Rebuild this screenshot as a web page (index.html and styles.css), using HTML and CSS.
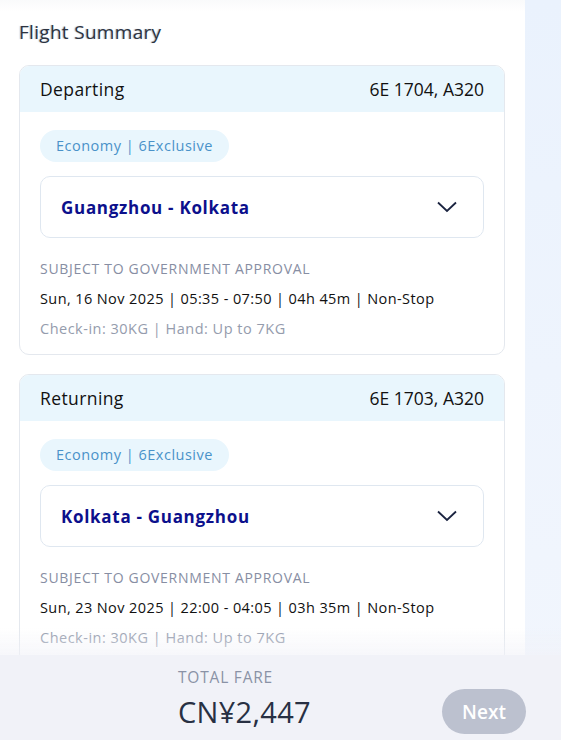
FILE: index.html
```html
<!DOCTYPE html>
<html>
<head>
<meta charset="utf-8">
<link rel="stylesheet" href="styles.css">
</head>
<body>
<div class="layout">
  <main class="panel">
    <h1 class="title">Flight Summary</h1>
    <section class="card">
      <div class="card-head">
        <span>Departing</span>
        <span class="flight-no">6E 1704, A320</span>
      </div>
      <div class="card-body">
        <span class="pill">Economy | 6Exclusive</span>
        <div class="route">
          <span class="route-name">Guangzhou - Kolkata</span>
          <svg class="chev" width="20" height="12" viewBox="0 0 20 12"><path d="M1 1.5 L10 10 L19 1.5" fill="none" stroke="#1b2440" stroke-width="1.8"/></svg>
        </div>
        <div class="approval">SUBJECT TO GOVERNMENT APPROVAL</div>
        <div class="when">Sun, 16 Nov 2025 | 05:35 - 07:50 | 04h 45m | Non-Stop</div>
        <div class="bags">Check-in: 30KG | Hand: Up to 7KG</div>
      </div>
    </section>
    <section class="card">
      <div class="card-head">
        <span>Returning</span>
        <span class="flight-no">6E 1703, A320</span>
      </div>
      <div class="card-body">
        <span class="pill">Economy | 6Exclusive</span>
        <div class="route">
          <span class="route-name">Kolkata - Guangzhou</span>
          <svg class="chev" width="20" height="12" viewBox="0 0 20 12"><path d="M1 1.5 L10 10 L19 1.5" fill="none" stroke="#1b2440" stroke-width="1.8"/></svg>
        </div>
        <div class="approval">SUBJECT TO GOVERNMENT APPROVAL</div>
        <div class="when">Sun, 23 Nov 2025 | 22:00 - 04:05 | 03h 35m | Non-Stop</div>
        <div class="bags">Check-in: 30KG | Hand: Up to 7KG</div>
      </div>
    </section>
  </main>
  <aside class="side"></aside>
</div>
<div class="fade"></div>
<footer class="footer">
  <div class="fare">
    <div class="fare-label">TOTAL FARE</div>
    <div class="fare-amount">CN¥2,447</div>
  </div>
  <button class="next">Next</button>
</footer>
</body>
</html>
```
FILE: styles.css
```css
html, body {
  margin: 0;
  padding: 0;
  height: 740px;
  overflow: hidden;
  font-family: "Open Sans", "Noto Sans", sans-serif;
  background: #ffffff;
}
.layout {
  display: flex;
  height: 740px;
}
.panel {
  width: 525px;
  padding: 16px 20px 0 19px;
  box-sizing: border-box;
  background: linear-gradient(#f9fafb 0, #ffffff 12px);
}
.side {
  flex: 1;
  background: linear-gradient(#eaf2fd, #f2f6fd);
}
.title {
  margin: 0 0 16px 0;
  font-size: 19px;
  font-weight: 400;
  color: #2c3340;
  height: 33px;
  line-height: 33px;
  letter-spacing: 0.3px;
  text-shadow: -1px 0 1px rgba(120,130,150,0.5);
}
.card {
  border: 1px solid #e4e8ee;
  border-radius: 10px;
  overflow: hidden;
  margin-bottom: 19px;
  background: #fff;
}
.card-head {
  display: flex;
  justify-content: space-between;
  align-items: center;
  height: 46px;
  padding: 0 20px;
  background: #e9f6fd;
  font-size: 17.5px;
  letter-spacing: 0.4px;
  color: #111;
}
.flight-no {
  letter-spacing: 0;
}
.card-body {
  padding: 18px 20px 15px 20px;
}
.pill {
  display: inline-block;
  height: 32px;
  line-height: 32px;
  padding: 0 16px;
  border-radius: 16px;
  background: #e9f6fd;
  color: #4a92c9;
  font-size: 14.5px;
  letter-spacing: 0.5px;
}
.route {
  display: flex;
  justify-content: space-between;
  align-items: center;
  margin-top: 14px;
  height: 60px;
  padding: 0 26px 0 20px;
  border: 1px solid #dfe7f0;
  border-radius: 10px;
}
.route-name {
  font-weight: 700;
  font-size: 17px;
  letter-spacing: 0.7px;
  color: #0c108c;
}
.chev { display: block; }
.approval {
  margin-top: 21px;
  font-size: 14px;
  letter-spacing: 0.7px;
  color: #878ea3;
  line-height: 20px;
}
.when {
  margin-top: 10px;
  font-size: 14.5px;
  letter-spacing: 0.4px;
  color: #111;
  line-height: 20px;
}
.bags {
  margin-top: 10px;
  font-size: 14.5px;
  letter-spacing: 0.5px;
  color: #959cad;
  line-height: 20px;
}
.fade {
  position: fixed;
  left: 0;
  right: 0;
  top: 628px;
  height: 27px;
  background: linear-gradient(rgba(241,242,248,0), rgba(241,242,248,0.6));
}
.footer {
  position: fixed;
  left: 0;
  right: 0;
  bottom: 0;
  height: 85px;
  background: #f1f2f8;
  display: flex;
  align-items: flex-start;
  padding: 0 35px 0 178px;
}
.fare {
  flex: 1;
  padding-top: 11px;
}
.fare-label {
  font-size: 15.5px;
  letter-spacing: 0.8px;
  color: #8a92a6;
  line-height: 22px;
}
.fare-amount {
  margin-top: 6px;
  font-size: 29px;
  letter-spacing: 0.3px;
  color: #283043;
  line-height: 36px;
}
.next {
  margin-top: 34px;
  width: 84px;
  height: 45px;
  border: none;
  border-radius: 23px;
  background: #bcc1cf;
  color: #fff;
  font-family: inherit;
  font-size: 19px;
  font-weight: 600;
}
```
